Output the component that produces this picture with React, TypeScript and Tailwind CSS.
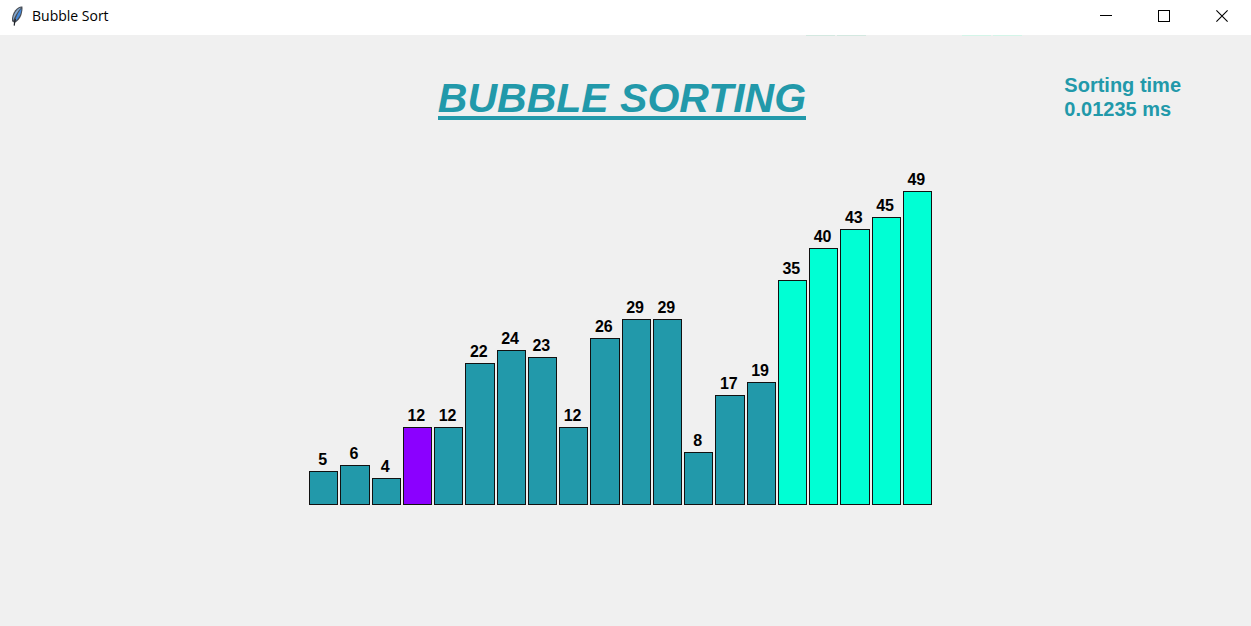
type BarState = "idle" | "active" | "sorted";

const values = [5, 6, 4, 12, 12, 22, 24, 23, 12, 26, 29, 29, 8, 17, 19, 35, 40, 43, 45, 49];
const activeIndex = 3;
const sortedFrom = 15;

const fills: Record<BarState, string> = {
  idle: "bg-[#2299aa]",
  active: "bg-[#8b00ff]",
  sorted: "bg-[#00ffd4]",
};

function stateOf(index: number): BarState {
  if (index === activeIndex) return "active";
  return index >= sortedFrom ? "sorted" : "idle";
}

function FeatherIcon() {
  return (
    <svg viewBox="0 0 14 22" className="h-[22px] w-[14px]" aria-hidden="true">
      <path d="M12.4 1.6C10.4 1 7.4 2.6 5.2 5.2C2.8 8.2 1.6 12.4 2 16.2L4.6 18C7.6 16.4 10.2 13.4 11.4 10C12.2 7.2 12.8 4 12.4 1.6Z" fill="#4a4e55" />
      <path d="M11.2 2.4C8.4 3 5.6 5.8 4.2 9.2C3.2 11.6 2.8 14 3.2 15.6C4.6 11.4 7.2 6.8 11.2 2.4Z" fill="#86a9cf" />
      <path d="M11.4 3.4C8.8 6.4 6.2 11 5 16C8.4 13.8 11.6 8.6 11.4 3.4Z" fill="#4388da" />
      <path d="M5.4 14C4.8 16 4.4 18 4.2 20.6" fill="none" stroke="#20242a" strokeWidth="1.2" />
    </svg>
  );
}

function TitleBar() {
  const button = "flex h-full w-[58px] items-center justify-center pb-[3px]";
  return (
    <header className="flex h-[35px] items-center bg-white">
      <div className="flex flex-1 items-center gap-2 pb-1 pl-[10px]">
        <FeatherIcon />
        <span className="font-['Open_Sans',sans-serif] text-[14px] leading-5 text-black">Bubble Sort</span>
      </div>
      <button type="button" aria-label="Minimize" className={button}>
        <svg viewBox="0 0 12 12" className="h-3 w-3" shapeRendering="crispEdges">
          <path d="M0 5.5H12" stroke="#000" />
        </svg>
      </button>
      <button type="button" aria-label="Maximize" className={button}>
        <svg viewBox="0 0 12 12" className="h-3 w-3" shapeRendering="crispEdges">
          <rect x="0.5" y="0.5" width="11" height="11" fill="none" stroke="#000" />
        </svg>
      </button>
      <button type="button" aria-label="Close" className={button}>
        <svg viewBox="0 0 12 12" className="h-3 w-3">
          <path d="M0.4 0.4L11.6 11.6M11.6 0.4L0.4 11.6" stroke="#000" strokeWidth="1.1" />
        </svg>
      </button>
    </header>
  );
}

function Bar({ value, state }: { value: number; state: BarState }) {
  return (
    <li className="flex flex-col">
      <span className="pr-[2px] pb-px text-center text-[16px] leading-5 font-bold text-black">{value}</span>
      <div
        className={`border border-[#111] ${fills[state]}`}
        style={{ height: Math.round(value * 6.37 + 1.7) }}
      />
    </li>
  );
}

export default function App() {
  return (
    <div className="flex min-h-screen flex-col bg-[#f0f0f0] font-['Liberation_Sans',Arial,sans-serif]">
      <TitleBar />
      <div className="flex h-px justify-end gap-[2px] pr-[229px]" aria-hidden="true">
        <span className="w-[29px] bg-[#d3e8e0]" />
        <span className="mr-[94px] w-[29px] bg-[#d3e8e0]" />
        <span className="w-[29px] bg-[#d3f5e8]" />
        <span className="w-[29px] bg-[#d3f5e8]" />
      </div>
      <main className="flex flex-1 flex-col">
        <div className="grid grid-cols-[1fr_auto_1fr] items-start pt-[37px] pr-[70px] pl-[63px] text-[#2299aa]">
          <h1 className="col-start-2 border-b-4 border-[#2299aa] pt-[7px] text-[41px] leading-9 font-bold italic">
            BUBBLE SORTING
          </h1>
          <p className="justify-self-end text-[20px] leading-6 font-bold">
            Sorting time
            <br />
            0.01235 ms
          </p>
        </div>
        <ul className="mx-auto mt-[49px] grid w-[633px] grid-cols-20 items-end gap-[2px] pr-[10px]">
          {values.map((value, index) => (
            <Bar key={index} value={value} state={stateOf(index)} />
          ))}
        </ul>
      </main>
    </div>
  );
}
